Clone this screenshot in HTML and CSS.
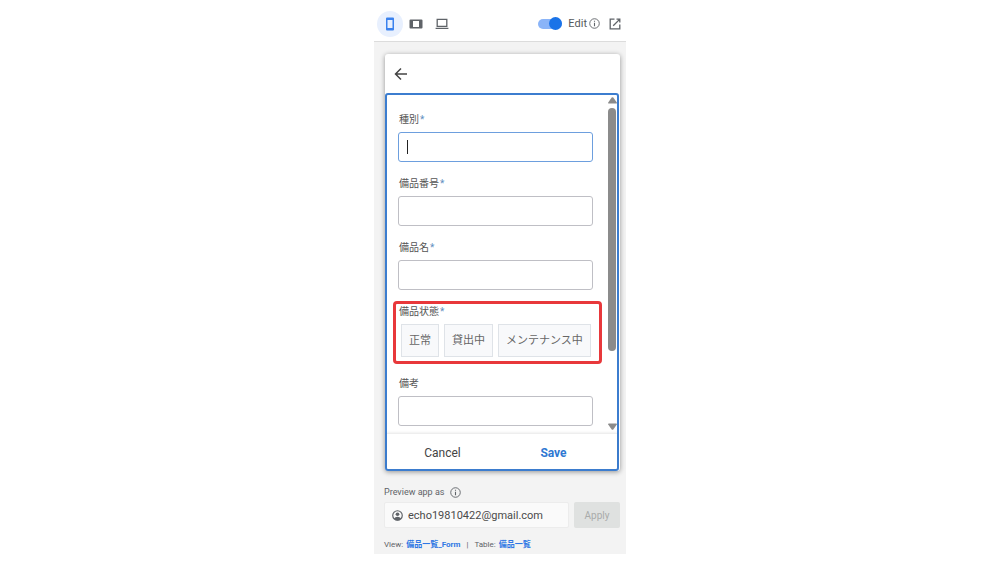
FILE: index.html
```
<!DOCTYPE html>
<html lang="ja">
<head>
    <meta charset="UTF-8">
    <meta name="viewport" content="width=device-width, initial-scale=1.0">
    <title>備品一覧_Form</title>
    <link rel="stylesheet" href="styles.css">
</head>
<body>
    <div class="panel">
        <header class="toolbar">
            <button class="device selected" type="button" aria-label="Phone">
                <svg width="10" height="14" viewBox="0 0 10 14"><path fill="currentColor" fill-rule="evenodd" d="M2 .5h6a1 1 0 0 1 1 1v11a1 1 0 0 1-1 1H2a1 1 0 0 1-1-1v-11a1 1 0 0 1 1-1zM2.500 3v8h5V3z"/></svg>
            </button>
            <button class="device" type="button" aria-label="Tablet">
                <svg width="14" height="10" viewBox="0 0 14 10"><path fill="currentColor" fill-rule="evenodd" d="M1.500 .5h11a1 1 0 0 1 1 1v7a1 1 0 0 1-1 1h-11a1 1 0 0 1-1-1v-7a1 1 0 0 1 1-1zM4 2v6h6V2z"/></svg>
            </button>
            <button class="device" type="button" aria-label="Desktop">
                <svg width="14" height="12" viewBox="0 0 14 12"><path fill="none" stroke="currentColor" stroke-width="1.300" d="M2.200 1.400h9.600v7H2.200zM.6 10.400h12.800"/></svg>
            </button>
            <div class="edit">
                <input class="switch" type="checkbox" id="edit" checked>
                <label for="edit">Edit</label>
                <svg width="11" height="11" viewBox="0 0 12 12"><circle cx="6" cy="6" r="5.200" fill="none" stroke="currentColor"/><path stroke="currentColor" stroke-width="1.200" d="M6 5.300V9M6 3v1.200"/></svg>
            </div>
            <a class="open" href="#" aria-label="Open in new tab">
                <svg width="12" height="12" viewBox="0 0 12 12"><path fill="none" stroke="currentColor" stroke-width="1.300" d="M5.500 1.200H1.200v9.600h9.600V6.500M7.500 1.200h3.300v3.300M10.600 1.400L4.200 7.800"/></svg>
            </a>
        </header>

        <main class="preview">
            <div class="card">
                <div class="card-header">
                    <button class="back" type="button" aria-label="Back">
                        <svg width="14" height="14" viewBox="0 0 14 14"><path fill="none" stroke="currentColor" stroke-width="1.500" d="M13 7H1.800M7 1.500L1.500 7 7 12.500"/></svg>
                    </button>
                </div>
                <form class="form">
                    <div class="form-body">
                        <div class="fields">
                            <div class="field focused">
                                <label for="type">種別<span class="required">*</span></label>
                                <input type="text" id="type">
                                <span class="caret"></span>
                            </div>
                            <div class="field">
                                <label for="number">備品番号<span class="required">*</span></label>
                                <input type="text" id="number">
                            </div>
                            <div class="field">
                                <label for="name">備品名<span class="required">*</span></label>
                                <input type="text" id="name">
                            </div>
                            <div class="field marked" role="group" aria-labelledby="status">
                                <span class="label" id="status">備品状態<span class="required">*</span></span>
                                <div class="options">
                                    <button type="button">正常</button>
                                    <button type="button">貸出中</button>
                                    <button type="button">メンテナンス中</button>
                                </div>
                            </div>
                            <div class="field">
                                <label for="note">備考</label>
                                <input type="text" id="note">
                            </div>
                        </div>
                        <div class="scrollbar">
                            <svg width="9" height="7" viewBox="0 0 9 7"><path fill="currentColor" d="M3.700.6q.8-.9 1.600 0L8.800 5.500q.3 1-.6 1H.8q-.9 0-.6-1z"/></svg>
                            <div class="track"><div class="thumb"></div></div>
                            <svg width="9" height="7" viewBox="0 0 9 7"><path fill="currentColor" d="M3.700 6.400q.8.900 1.600 0L8.800 1.500q.3-1-.6-1H.8q-.9 0-.6 1z"/></svg>
                        </div>
                    </div>
                    <div class="form-footer">
                        <button type="button">Cancel</button>
                        <button class="save" type="button">Save</button>
                    </div>
                </form>
            </div>

            <div class="preview-label">
                <label for="user">Preview app as</label>
                <svg width="11" height="11" viewBox="0 0 12 12"><circle cx="6" cy="6" r="5.200" fill="none" stroke="currentColor"/><path stroke="currentColor" stroke-width="1.200" d="M6 5.300V9M6 3v1.200"/></svg>
            </div>
            <div class="preview-row">
                <div class="user">
                    <svg width="11" height="11" viewBox="0 0 12 12"><circle cx="6" cy="6" r="5.200" fill="none" stroke="currentColor" stroke-width="1.300"/><circle cx="6" cy="4.600" r="2" fill="currentColor"/><path fill="currentColor" d="M2 9.300Q3.600 7.400 6 7.400t4 1.900Q8.500 11.400 6 11.400T2 9.300z"/></svg>
                    <input type="text" id="user" value="echo19810422@gmail.com">
                </div>
                <button class="apply" type="button" disabled>Apply</button>
            </div>
            <div class="links">
                <span>View: <a href="#">備品一覧_Form</a></span>
                <span>|</span>
                <span>Table: <a href="#">備品一覧</a></span>
            </div>
        </main>
    </div>
</body>
</html>
```

FILE: styles.css
```
* {
    box-sizing: border-box;
}
body {
    margin: 0;
    background-color: #fff;
    color: #5f6368;
    font-family: Roboto, "Noto Sans CJK JP", sans-serif;
    font-size: 10px;
}
button, input {
    font-family: inherit;
    margin: 0;
}
button {
    padding: 0;
    border: none;
    background: none;
    color: inherit;
    cursor: pointer;
}
svg {
    display: block;
    flex: none;
}
.panel {
    max-width: 252px;
    margin: 0 auto;
}

/* Toolbar */
.toolbar {
    display: flex;
    align-items: center;
    height: 42px;
    padding: 6px 5px 0 3px;
    border-bottom: 1px solid #dcdcdc;
}
.device {
    display: flex;
    align-items: center;
    justify-content: center;
    width: 26px;
    height: 26px;
    border-radius: 50%;
}
.device.selected {
    background-color: #e8f0fe;
    color: #3b82ee;
}
.edit {
    display: flex;
    align-items: center;
    gap: 2px;
    margin-left: auto;
    font-size: 11px;
}
.edit label {
    color: #55585c;
    line-height: 14px;
}
.switch {
    appearance: none;
    display: flex;
    align-items: center;
    justify-content: flex-end;
    width: 24px;
    height: 10px;
    margin-right: 4px;
    border-radius: 5px;
    background-color: #8ab4f8;
}
.switch::after {
    content: "";
    width: 13px;
    height: 13px;
    flex: none;
    border-radius: 50%;
    background-color: #1a73e8;
}
.open {
    margin-left: 9px;
    color: #5f6368;
}

/* Phone preview */
.preview {
    padding: 12px 6px 2px 10px;
    background-color: #f3f3f3;
}
.card {
    margin-left: 1px;
    border-radius: 3px;
    background-color: #fff;
    box-shadow: 0 1px 5px rgba(0, 0, 0, 0.4);
}
.card-header {
    display: flex;
    align-items: center;
    height: 39px;
    padding-left: 9px;
    color: #444;
}
.form {
    margin-right: 1px;
    border: 2px solid #3c7dcf;
    border-radius: 3px;
}
.form-body {
    display: flex;
}
.fields {
    flex: 1;
    min-width: 0;
    display: flex;
    flex-direction: column;
    gap: 13px;
    padding: 16px 15px 7px 11px;
}
.field {
    position: relative;
    display: flex;
    flex-direction: column;
    gap: 3px;
}
.field label, .label {
    padding-left: 1px;
    color: #555;
    line-height: 18px;
}
.required {
    margin-left: 1px;
    color: #5f8fc0;
}
.field input {
    width: 100%;
    height: 30px;
    padding: 0 8px;
    border: 1px solid #bfbfc5;
    border-radius: 3px;
    outline: none;
}
.focused input {
    border-color: #6d9fde;
}
.caret {
    position: absolute;
    left: 9px;
    bottom: 8px;
    width: 1px;
    height: 14px;
    background-color: #222;
}
.marked {
    padding-bottom: 5px;
}
.marked::after {
    content: "";
    position: absolute;
    inset: -2px -9px -2px -5px;
    border: 3px solid #e8383b;
    border-radius: 4px;
    pointer-events: none;
}
.options {
    display: flex;
    gap: 5px;
    padding-left: 3px;
}
.options button {
    height: 33px;
    padding: 0 7px;
    border: 1px solid #dfe3e8;
    background-color: #f8f9fb;
    color: #666;
    font-size: 11px;
    line-height: 16px;
    white-space: nowrap;
}
.scrollbar {
    display: flex;
    flex-direction: column;
    width: 9px;
    padding: 2px 0 3px;
    color: #8b8b8b;
}
.track {
    flex: 1;
    padding: 4px 1px 0 0;
}
.thumb {
    height: 77%;
    border-radius: 4px;
    background-color: #8b8b8b;
}
.form-footer {
    display: flex;
    height: 36px;
    padding-right: 8px;
    border-top: 1px solid #eee;
    box-shadow: 0 -1px 2px rgba(0, 0, 0, 0.06);
}
.form-footer button {
    flex: 1;
    padding-top: 2px;
    color: #444;
    font-size: 12px;
}
.form-footer .save {
    color: #2f78d2;
    font-weight: bold;
}

/* Preview user */
.preview-label {
    display: flex;
    align-items: center;
    gap: 6px;
    margin-top: 14px;
    font-size: 9px;
    line-height: 14px;
}
.preview-row {
    display: flex;
    gap: 5px;
    margin-top: 3px;
}
.user {
    flex: 1;
    display: flex;
    align-items: center;
    gap: 5px;
    height: 26px;
    padding: 0 7px;
    border: 1px solid #ececec;
    border-radius: 2px;
    background-color: #fafafa;
}
.user input {
    flex: 1;
    min-width: 0;
    padding: 0;
    border: none;
    outline: none;
    background: none;
    color: #4a4a4a;
    font-size: 11px;
}
.apply {
    width: 46px;
    border-radius: 2px;
    background-color: #dfe1e0;
    color: #a9abaa;
    font-size: 10px;
}
.links {
    display: flex;
    gap: 6px;
    margin-top: 10px;
    font-size: 8px;
    line-height: 14px;
}
.links a {
    margin-left: 1px;
    color: #2f78e4;
    font-weight: bold;
    text-decoration: none;
}
```
